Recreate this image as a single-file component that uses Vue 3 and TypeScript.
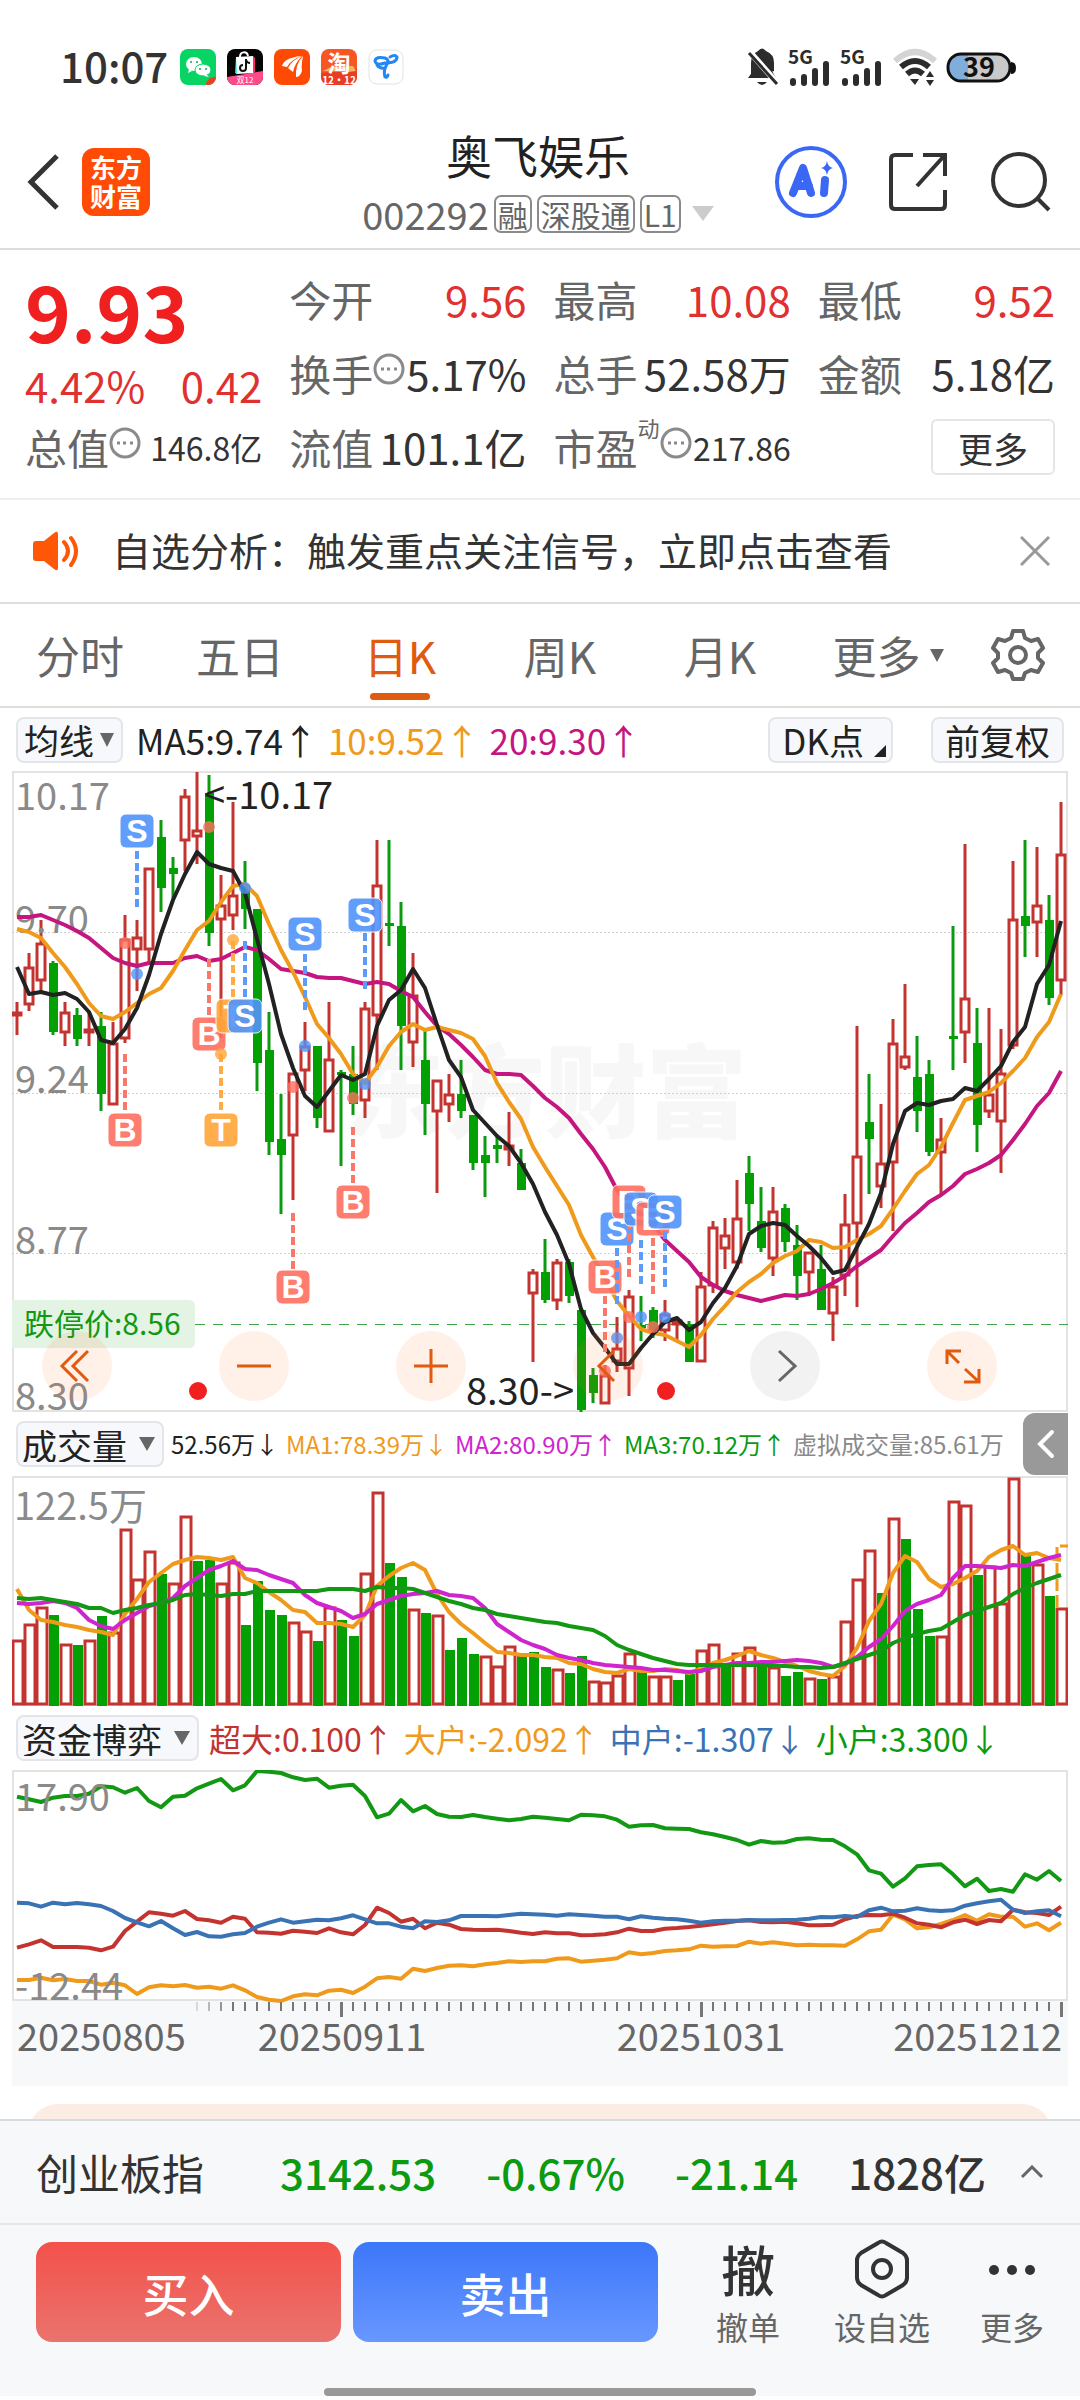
<script setup lang="ts">
import { ref } from 'vue'

type Tone = 'up' | 'down'

interface Marker {
  day: number
  box: number
  dash: [number, number]
  dot: number
  kind: 'S' | 'B' | 'T'
}

const DAYS = 88
const STEP = 12
const dayX = (i: number): number => 5 + i * STEP

// Plot units of the three panels, converted to panel pixels
const priceY = (v: number): number => Math.round((v - 27) * 0.4208 + 1)
const volumeY = (v: number): number => Math.round((v - 198) / 3 + 1)
const fundY = (v: number): number => (v - 210) / 3 + 1

const line = (values: number[], y: (v: number) => number): string =>
  values.map((v, i) => `${dayX(i)},${y(v).toFixed(1)}`).join(' ')

// tone, high, body top, body bottom, low
const rawCandles = `r573,597,606,652 r458,491,581,596 r378,433,523,555 g475,482,645,653 r573,597,648,678 g589,605,661,678
r597,637,646,678 g597,630,793,833 r622,670,818,818 r368,425,662,670 r378,418,451,548 r254,254,451,480 g140,181,303,360
g230,254,270,328 r67,83,190,262 r27,164,181,246 g34,76,409,441 r271,344,378,660 r99,319,369,402 g238,295,352,401
g352,352,719,784 g597,687,907,938 g793,899,938,1078 r743,743,891,1045 r622,678,737,784 g678,678,850,873 r573,710,883,883
g735,740,746,964 g678,744,816,841 r573,589,810,850 r189,295,606,735 g189,385,392,441 g336,393,630,735 r458,556,670,727
g641,711,817,890 r760,760,834,1028 r744,792,818,858 g711,793,833,850 g841,841,955,972 g891,938,955,1037 g891,914,922,955
r834,913,925,964 g923,955,1021,1021 r1208,1216,1267,1428 g1136,1216,1282,1290 r1184,1192,1283,1306 g1184,1192,1273,1290
g1306,1306,1542,1550 g1444,1461,1502,1526 r1436,1461,1528,1528 r1322,1397,1430,1453 r1258,1273,1445,1510 g1273,1340,1347,1380
g1299,1306,1354,1371 r1282,1314,1356,1380 r1330,1330,1340,1380 g1331,1339,1428,1428 r1216,1248,1430,1430 r1095,1109,1249,1265
r1086,1127,1160,1208 r996,1086,1193,1208 g939,981,1053,1118 g1013,1095,1159,1168 r1013,1070,1185,1224 g1053,1062,1143,1167
g1103,1151,1224,1282 r1167,1167,1217,1273 g1152,1209,1306,1306 r1226,1249,1315,1380 r1029,1102,1225,1273 r630,939,1102,1298
g744,858,898,1029 r817,956,1014,1062 r613,670,956,1118 r531,703,730,735 g654,752,833,882 g711,744,931,939 r850,898,932,1029
g393,655,661,735 r197,564,647,719 g589,671,866,931 r589,793,834,850 r638,743,858,980 r238,376,679,686 g189,369,392,466
r206,344,385,466 g320,378,564,580 r99,221,523,556`

const toneOf = (token: string): Tone => (token[0] === 'r' ? 'up' : 'down')

const candles = rawCandles.split(/\s+/).map((token, i) => {
  const [high, top, bottom, low] = token.slice(1).split(',').map((v) => priceY(Number(v)))
  return { x: dayX(i), tone: toneOf(token), high, top, bottom, low }
})

const ma5 = [490,554,550,558,553,566,597,665,671,637,588,510,412,332,270,216,245,254,263,315,425,530,650,730,796,822,784,746,758,744,630,568,546,494,540,628,711,752,831,860,892,916,955,1007,1072,1127,1196,1304,1361,1395,1434,1435,1396,1362,1334,1325,1352,1333,1288,1253,1200,1125,1107,1099,1103,1130,1153,1182,1217,1210,1155,1100,1028,910,833,813,818,808,805,778,784,757,725,668,634,530,485,380]
const ma10 = [400,407,422,458,490,530,577,608,615,597,577,554,540,500,450,402,380,337,298,292,322,388,450,502,562,627,658,696,745,765,728,677,646,627,640,633,640,648,662,702,765,812,852,918,966,1010,1056,1127,1180,1230,1283,1320,1350,1360,1364,1380,1393,1365,1327,1297,1262,1240,1221,1193,1177,1165,1139,1144,1158,1156,1140,1125,1105,1066,1022,983,960,918,860,806,798,788,765,737,706,657,620,554]
const ma20 = [371,371,366,378,390,404,421,446,470,482,487,482,481,481,470,465,476,471,458,444,450,471,495,500,505,514,517,516,523,530,525,531,548,562,598,630,650,675,705,735,744,745,748,773,802,822,850,888,922,966,1020,1050,1076,1104,1138,1165,1192,1226,1247,1260,1271,1278,1285,1278,1271,1272,1268,1256,1242,1225,1202,1183,1163,1130,1099,1074,1049,1032,1010,982,970,957,936,901,864,821,790,737]

const rawVolumes = `r688 r640 r587 g612 r698 g702 r686 g615 r664 r355 r504 r419 g489 r516 r314 g449 g447 r516 r454 g641 g510 g597 g612 r632
r659 g690 r587 g626 g674 r487 r244 g455 g498 r593 g606 r612 g717 g681 g729 r735 r765 r706 g733 g724 g767 r775 g787 g736 r810
r813 r793 r726 g773 r794 r794 g807 g789 r717 r698 g760 r727 r709 g757 r769 g796 g784 r801 g804 r796 r630 r503 r416 g547 r320
g384 g594 g674 r676 r270 r283 g492 r464 r576 r200 g432 r459 g556 r592`

const volumes = rawVolumes.split(/\s+/).map((token, i) => ({
  x: dayX(i),
  tone: toneOf(token),
  top: volumeY(Number(token.slice(1))),
}))

const vol1 = [535,597,626,634,643,648,656,663,672,608,565,512,487,458,448,438,442,447,437,500,515,542,566,597,602,637,637,639,647,612,525,495,472,457,478,550,603,640,667,695,723,725,732,733,738,741,757,759,773,783,787,774,780,780,775,778,787,775,757,748,735,721,731,742,752,765,779,788,794,765,710,630,578,485,435,452,503,527,518,500,480,437,418,404,431,426,441,446]
const vol2 = [577,580,576,571,576,590,628,645,653,627,606,585,575,562,525,500,478,466,449,474,476,492,504,517,551,575,588,600,622,608,579,566,556,550,546,539,551,556,562,590,638,663,686,702,715,733,740,747,756,762,765,767,770,776,778,781,784,780,769,763,757,755,753,752,750,748,750,756,768,760,738,708,684,645,600,579,566,552,500,466,466,469,472,462,464,452,442,433]
const vol3 = [562,565,561,568,573,578,590,592,607,598,592,583,575,568,553,548,551,555,550,549,539,539,540,541,540,539,534,534,534,540,529,530,531,533,547,558,570,578,590,597,610,616,622,628,632,636,645,650,658,675,703,718,730,740,751,760,762,762,761,762,761,762,763,764,766,767,768,770,768,757,745,733,720,697,680,668,660,655,633,612,600,588,576,549,530,515,503,493]

const fundSmall = [287,295,303,290,285,285,278,256,259,275,261,300,319,287,284,262,248,234,268,253,210,212,216,229,237,233,260,254,251,285,349,338,297,331,315,339,347,348,342,348,353,358,354,347,350,354,358,341,343,346,356,377,373,372,382,383,384,394,400,408,417,431,420,425,424,414,412,416,417,436,460,508,518,557,532,496,492,490,520,556,533,570,564,572,520,536,510,540]
const fundHuge = [740,730,718,738,738,738,740,748,737,690,662,634,638,644,630,654,658,665,647,653,694,695,698,689,692,696,682,694,700,672,620,636,662,653,682,665,671,684,686,687,686,690,695,699,694,697,697,703,702,700,694,683,690,690,683,681,678,674,670,665,660,658,663,664,662,667,673,673,671,655,645,642,643,638,650,667,671,679,664,656,669,657,661,626,634,636,642,617]
const fundMid = [605,607,617,605,610,606,610,615,630,651,664,676,660,682,702,693,706,707,700,696,677,665,655,665,661,656,658,652,643,655,667,667,677,682,661,663,658,645,645,645,646,642,638,640,641,644,640,642,644,647,647,655,646,650,653,655,659,665,661,659,659,657,658,658,657,656,653,648,649,645,648,628,620,631,629,622,628,630,628,614,607,601,596,626,636,631,628,646]
const fundBig = [837,837,830,838,834,840,840,851,845,853,879,859,853,856,852,860,857,863,853,868,888,896,900,886,880,883,869,866,876,857,832,828,833,803,810,801,794,793,796,790,786,781,783,781,781,773,772,782,779,776,772,754,760,756,750,748,745,734,737,736,735,722,728,724,728,733,731,733,733,734,715,691,686,641,655,682,679,669,657,642,659,640,647,647,677,667,688,665]

const markers: Marker[] = [
  { day: 10, box: 168, dash: [214, 350], dot: 507, kind: 'S' },
  { day: 9, box: 877, dash: [698, 836], dot: 434, kind: 'B' },
  { day: 16, box: 649, dash: [472, 606], dot: 157, kind: 'B' },
  { day: 17, box: 877, dash: [698, 836], dot: 698, kind: 'T' },
  { day: 18, box: 606, dash: [428, 564], dot: 427, kind: 'T' },
  { day: 19, box: 606, dash: [428, 564], dot: 303, kind: 'S' },
  { day: 24, box: 413, dash: [459, 595], dot: 678, kind: 'S' },
  { day: 23, box: 1252, dash: [1074, 1212], dot: 776, kind: 'B' },
  { day: 28, box: 1048, dash: [870, 1006], dot: 801, kind: 'B' },
  { day: 29, box: 366, dash: [410, 545], dot: 768, kind: 'S' },
  { day: 49, box: 1228, dash: [1273, 1408], dot: 1450, kind: 'B' },
  { day: 50, box: 1114, dash: [1158, 1294], dot: 1371, kind: 'S' },
  { day: 51, box: 1050, dash: [1095, 1232], dot: 1322, kind: 'B' },
  { day: 52, box: 1066, dash: [1138, 1245], dot: 1322, kind: 'S' },
  { day: 53, box: 1090, dash: [1135, 1270], dot: 1347, kind: 'B' },
  { day: 54, box: 1073, dash: [1118, 1252], dot: 1322, kind: 'S' },
]

const priceLabels = [
  { text: '10.17', y: 39 },
  { text: '9.70', y: 162 },
  { text: '9.24', y: 322 },
  { text: '8.77', y: 483 },
  { text: '8.30', y: 639 },
]

const ticks = Array.from({ length: DAYS - 15 }, (_, k) => {
  const day = k + 15
  return { x: dayX(day), major: [27, 57, 87].includes(day), opacity: Math.min(1, 0.25 + k * 0.25) }
})

const tabs = ['分时', '五日', '日K', '周K', '月K']
const activeTab = ref('日K')
</script>

<template>
  <div class="screen">
    <div class="status">
      <span class="clock">10:07</span>
      <svg class="app" viewBox="0 0 36 36"><rect width="36" height="36" rx="8" fill="#07d463" /><ellipse cx="14" cy="15" rx="8" ry="7" fill="#fff" /><path d="M9 20l-1 4 4-2z" fill="#fff" /><ellipse cx="23" cy="21" rx="8" ry="6" fill="#fff" stroke="#07d463" /><path d="M26 25l3 3-5-1z" fill="#fff" /><g fill="#07a84e"><circle cx="11" cy="13" r="1" /><circle cx="17" cy="13" r="1" /><circle cx="20" cy="20" r="1" /><circle cx="26" cy="20" r="1" /></g><path d="M26 36a9 8 0 0 1 10-8a8 8 0 0 1-8 8z" fill="#e5421f" /></svg>
      <svg class="app" viewBox="0 0 36 36"><rect width="36" height="36" rx="8" fill="#050505" /><path d="M0 28L36 22v6a8 8 0 0 1-8 8H8a8 8 0 0 1-8-8z" fill="#ff4b8b" /><path d="M9 8l17-1 1 17-18 1z" fill="#fff" /><path d="M26 7l2 2v14l-2 1z" fill="#ff2d63" /><path d="M9 8l-1 16 2 1z" fill="#25e6ec" /><path d="M13 8c0-6 7-6 8-1" stroke="#fff" stroke-width="2" fill="none" /><path d="M19 10v9a3 3 0 1 1-3-3M19 11q1 3 4 3" stroke="#111" stroke-width="2" fill="none" /><text x="18" y="34" font-size="8" text-anchor="middle" fill="#fff">双12</text></svg>
      <svg class="app" viewBox="0 0 36 36"><rect width="36" height="36" rx="8" fill="#ff4a05" /><path d="M8 17Q10 9 27 7Q17 11 13 18zM14 19Q18 11 28 7Q21 14 19 23zM22 28Q21 15 29 7Q27 17 28 22Q26 28 22 28z" fill="#fff" /></svg>
      <svg class="app" viewBox="0 0 36 36"><rect width="36" height="36" rx="8" fill="#f75722" /><path d="M0 24L36 20v8a8 8 0 0 1-8 8H8a8 8 0 0 1-8-8z" fill="#e83d25" /><path d="M2 22l8-4 22-1 3 5-8 1z" fill="#f6b45f" /><text x="18" y="23" font-size="23" font-weight="700" text-anchor="middle" fill="#fff">淘</text><text x="18" y="35" font-size="10" font-weight="700" text-anchor="middle" fill="#fff">12·12</text></svg>
      <svg class="app" viewBox="0 0 36 36"><rect x="1" y="1" width="34" height="34" rx="8" fill="#fff" stroke="#e2e2e2" /><path d="M17 14Q8 17 7 12Q8 7 17 9Q22 11 19 15Q15 22 17 28Q19 29 20 26M17 14Q29 14 29 8Q27 5 22 8M9 16Q12 20 17 19" stroke="#2386f5" stroke-width="3" fill="none" stroke-linecap="round" /></svg>
      <svg class="system" width="272" height="42" viewBox="0 0 272 42" fill="none">
        <path d="M5 32V17Q5 8 12 5q4-5 8 0q8 3 8 12v8z" fill="#2c2c2c" /><path d="M2 32h28l-4-7V17H7v8z" fill="#2c2c2c" /><path d="M3 5L32 38" stroke="#fff" stroke-width="6" /><path d="M3 7L31 38" stroke="#2c2c2c" stroke-width="3" /><path d="M11 36h10q-5 6-10 0" fill="#2c2c2c" />
        <g fill="#2c2c2c" font-size="19" font-weight="700"><text x="42" y="18">5G</text><text x="94" y="18">5G</text></g>
        <g stroke="#2c2c2c" stroke-width="6" stroke-linecap="round"><path d="M47 35v2M58 31v6M69 25v12M80 18v19" /><path d="M99 35v2M110 31v6M121 25v12M132 18v19" /></g>
        <g stroke-width="6"><path d="M149 15Q169-3 189 15" stroke="#d4d4d4" /><path d="M155 21Q169 9 183 21" stroke="#2c2c2c" /><path d="M161 28Q169 21 177 28" stroke="#2c2c2c" /></g><path d="M164 33h9l-4 6zM180 31l4-6 4 6zM180 34h8l-4 6z" fill="#2c2c2c" />
        <rect x="202" y="8" width="62" height="27" rx="13" fill="#c9c9c9" /><path d="M216 8h6v27h-6a13 13 0 0 1 0-27z" fill="#81addb" /><rect x="202" y="8" width="62" height="27" rx="13" stroke="#111" stroke-width="3" /><path d="M265 16q5 0 5 6t-5 6z" fill="#111" /><text x="233" y="31" font-size="27" font-weight="700" text-anchor="middle" fill="#111">39</text>
      </svg>
    </div>

    <header class="header">
      <div class="left">
        <button class="plain" aria-label="返回"><svg width="34" height="60" viewBox="0 0 34 60" fill="none" stroke="#333" stroke-width="5"><path d="M31 4L5 30l26 26" /></svg></button>
        <div class="brand"><span>东方</span><span>财富</span></div>
      </div>
      <div class="title">
        <h1>奥飞娱乐</h1>
        <div class="code"><span>002292</span><i>融</i><i>深股通</i><i>L1</i><svg width="22" height="15" viewBox="0 0 22 15"><path d="M0 0h22L11 15z" fill="#ccc" /></svg></div>
      </div>
      <div class="tools">
        <button class="plain" aria-label="AI"><svg width="74" height="74" viewBox="0 0 74 74" fill="none"><circle cx="37" cy="37" r="34" stroke="#3a68f5" stroke-width="4" /><path d="M19 48L29 23L37 48M23 41h12" stroke="#3a68f5" stroke-width="8" stroke-linecap="round" stroke-linejoin="round" /><path d="M51 35L50 48" stroke="#3a68f5" stroke-width="8" stroke-linecap="round" /><path d="M53 16q1 6 6 7q-5 1-6 7q-1-6-6-7q5-1 6-7z" fill="#3a68f5" /></svg></button>
        <button class="plain" aria-label="分享"><svg width="60" height="60" viewBox="0 0 60 60" fill="none" stroke="#333" stroke-width="4"><path d="M24 3H6Q2 3 2 7v46q0 4 4 4h46q4 0 4-4V38" /><path d="M34 3h22v21M55 4L28 34" /></svg></button>
        <button class="plain" aria-label="搜索"><svg width="62" height="62" viewBox="0 0 62 62" fill="none" stroke="#333" stroke-width="4"><circle cx="29" cy="29" r="26" /><path d="M47 47l12 12" /></svg></button>
      </div>
    </header>

    <section class="quote">
      <div class="lead">
        <strong>9.93</strong>
        <div class="pair red"><span>4.42%</span><span>0.42</span></div>
      </div>
      <div class="cell"><span>今开</span><b class="red">9.56</b></div>
      <div class="cell"><span>最高</span><b class="red">10.08</b></div>
      <div class="cell"><span>最低</span><b class="red">9.52</b></div>
      <div class="cell"><span>换手<svg class="info" viewBox="0 0 32 32"><circle cx="16" cy="16" r="14" /><path d="M8 16h3M14 16h3M21 16h3" /></svg></span><b>5.17%</b></div>
      <div class="cell"><span>总手</span><b>52.58万</b></div>
      <div class="cell"><span>金额</span><b>5.18亿</b></div>
      <div class="cell"><span>总值<svg class="info" viewBox="0 0 32 32"><circle cx="16" cy="16" r="14" /><path d="M8 16h3M14 16h3M21 16h3" /></svg></span><b class="small">146.8亿</b></div>
      <div class="cell"><span>流值</span><b>101.1亿</b></div>
      <div class="cell"><span>市盈<sup>动</sup><svg class="info" viewBox="0 0 32 32"><circle cx="16" cy="16" r="14" /><path d="M8 16h3M14 16h3M21 16h3" /></svg></span><b class="small">217.86</b></div>
      <div class="cell end"><button class="more">更多</button></div>
    </section>

    <section class="notice">
      <svg width="48" height="40" viewBox="0 0 48 40"><path d="M0 13q0-3 3-3h8L21 2q4-3 4 1v34q0 4-4 1L11 30H3q-3 0-3-3z" fill="#ff5708" /><path d="M31 11q8 9 0 18M38 7q10 13 0 27" fill="none" stroke="#ff5708" stroke-width="4" stroke-linecap="round" /></svg>
      <p>自选分析：触发重点关注信号，立即点击查看</p>
      <button class="plain" aria-label="关闭"><svg width="30" height="30" viewBox="0 0 30 30" stroke="#999" stroke-width="3"><path d="M1 1l28 28M29 1L1 29" /></svg></button>
    </section>

    <nav class="tabs">
      <button v-for="tab in tabs" :key="tab" class="plain" :class="{ active: tab === activeTab }" @click="activeTab = tab">{{ tab }}</button>
      <button class="plain">更多<svg width="14" height="13" viewBox="0 0 14 13"><path d="M0 0h14L7 13z" fill="#666" /></svg></button>
      <button class="plain" aria-label="设置"><svg width="54" height="54" viewBox="0 0 54 54" fill="none" stroke="#666" stroke-width="4"><path d="M22 3h10l2 7l6 3l7-2l5 9l-5 5v5l5 5l-5 9l-7-2l-6 3l-2 6H22l-2-6l-6-3l-7 2l-5-9l5-5v-5l-5-5l5-9l7 2l6-3z" stroke-linejoin="round" /><circle cx="27" cy="27" r="8" /></svg></button>
    </nav>

    <div class="legend average">
      <label class="picker tight"><select aria-label="均线"><option>均线</option></select><svg width="14" height="14" viewBox="0 0 14 14"><path d="M0 0h14L7 14z" fill="#666" /></svg></label>
      <span class="ink">MA5:9.74↑</span><span class="orange">10:9.52↑</span><span class="pink">20:9.30↑</span>
      <span class="spacer"></span>
      <button class="chip dk">DK点<svg width="12" height="12" viewBox="0 0 12 12"><path d="M12 0v12H0z" fill="#222" /></svg></button>
      <button class="chip">前复权</button>
    </div>

    <div class="kline">
      <svg class="plot" viewBox="0 0 1056 641">
        <text class="watermark" x="533" y="359" text-anchor="middle">东方财富</text>
        <g class="frame"><rect x="1" y="1" width="1054" height="639" /></g>
        <g class="grid"><path d="M0 161H1056M0 322H1056M0 482H1056" /></g>
        <path class="limit" d="M183 553H1056" />
        <g v-for="c in candles" :key="c.x" :class="c.tone">
          <path :d="`M${c.x} ${c.high}V${c.top}M${c.x} ${c.bottom}V${c.low}`" />
          <rect v-if="c.tone === 'up'" :x="c.x - 4" :y="c.top + 1" width="8" :height="Math.max(2, c.bottom - c.top - 2)" />
          <rect v-else :x="c.x - 4" :y="c.top" width="9" :height="Math.max(3, c.bottom - c.top)" />
        </g>
        <g class="axis"><text v-for="l in priceLabels" :key="l.text" x="3" :y="l.y">{{ l.text }}</text></g>
        <g class="curve">
          <polyline :points="line(ma20, priceY)" stroke="#c5157f" />
          <polyline :points="line(ma10, priceY)" stroke="#f09a1c" />
          <polyline :points="line(ma5, priceY)" stroke="#222" />
        </g>
        <g v-for="m in markers" :key="m.day" class="marker" :class="m.kind">
          <path :d="`M${dayX(m.day)} ${priceY(m.dash[0])}V${priceY(m.dash[1])}`" />
          <circle :cx="dayX(m.day)" :cy="priceY(m.dot)" r="6" />
          <rect :x="dayX(m.day) - 17" :y="priceY(m.box) - 17" width="34" height="34" rx="6" />
          <text :x="dayX(m.day)" :y="priceY(m.box) + 11">{{ m.kind }}</text>
        </g>
        <g class="extreme"><text x="192" y="38">&lt;-10.17</text><text x="562" y="634" text-anchor="end">8.30-&gt;</text></g>
        <path d="M0 529H177q6 0 6 6v36q0 6-6 6H0z" fill="#e3f4e4" />
        <text class="limit-text" x="12" y="564">跌停价:8.56</text>
        <g fill="#f12020"><circle cx="186" cy="620" r="9" /><circle cx="654" cy="620" r="9" /></g>
      </svg>
      <div class="controls">
        <button aria-label="快退"><svg viewBox="0 0 70 70"><path d="M35 20L20 35l15 15M46 20L31 35l15 15" /></svg></button>
        <button aria-label="缩小"><svg viewBox="0 0 70 70"><path d="M18 35h34" /></svg></button>
        <button aria-label="放大"><svg viewBox="0 0 70 70"><path d="M18 35h34M35 18v34" /></svg></button>
        <button aria-label="后退"><svg viewBox="0 0 70 70"><path d="M41 20L26 35l15 15" /></svg></button>
        <button class="off" aria-label="前进"><svg viewBox="0 0 70 70"><path d="M29 20l16 15-16 15" /></svg></button>
        <button aria-label="全屏"><svg viewBox="0 0 70 70"><path d="M20 33V20h14M21 21l11 11M52 38v13H37M51 50L38 38" stroke-width="4" /></svg></button>
      </div>
    </div>

    <div class="legend volume">
      <label class="picker"><select aria-label="成交量"><option>成交量</option></select><svg width="16" height="14" viewBox="0 0 16 14"><path d="M0 0h16L8 14z" fill="#666" /></svg></label>
      <span class="ink">52.56万↓</span><span class="orange">MA1:78.39万↓</span><span class="violet">MA2:80.90万↑</span><span class="green">MA3:70.12万↑</span><span class="grey">虚拟成交量:85.61万</span>
      <span class="spacer"></span>
      <button class="fold" aria-label="展开"><svg width="20" height="34" viewBox="0 0 20 34" fill="none" stroke="#fff" stroke-width="4" stroke-linecap="round"><path d="M16 5L4 17l12 12" /></svg></button>
    </div>

    <svg class="plot" viewBox="0 0 1056 230">
      <g class="frame"><rect x="1" y="1" width="1054" height="228" /></g>
      <text class="axis" x="2" y="44">122.5万</text>
      <g v-for="v in volumes" :key="v.x" class="bar" :class="v.tone">
        <rect v-if="v.tone === 'up'" :x="v.x - 4" :y="v.top + 1" width="10" :height="227 - v.top" />
        <rect v-else :x="v.x - 4" :y="v.top" width="10" :height="230 - v.top" />
      </g>
      <path d="M1045 131V70h11" fill="none" stroke="#f09a1c" stroke-width="3" stroke-dasharray="12 4" />
      <g class="curve">
        <polyline :points="line(vol1, volumeY)" stroke="#f09a1c" />
        <polyline :points="line(vol2, volumeY)" stroke="#cf25cf" />
        <polyline :points="line(vol3, volumeY)" stroke="#129812" />
      </g>
    </svg>

    <div class="legend fund">
      <label class="picker"><select aria-label="资金博弈"><option>资金博弈</option></select><svg width="16" height="14" viewBox="0 0 16 14"><path d="M0 0h16L8 14z" fill="#666" /></svg></label>
      <span class="crimson">超大:0.100↑</span><span class="orange">大户:-2.092↑</span><span class="blue">中户:-1.307↓</span><span class="green">小户:3.300↓</span>
    </div>

    <svg class="plot" viewBox="0 0 1056 316">
      <rect y="231" width="1056" height="85" fill="#f7f8fa" />
      <g class="frame"><rect x="1" y="1" width="1054" height="229" /></g>
      <g class="curve">
        <polyline :points="line(fundBig, fundY)" stroke="#f09a1c" />
        <polyline :points="line(fundHuge, fundY)" stroke="#c33431" />
        <polyline :points="line(fundMid, fundY)" stroke="#3a73b4" />
        <polyline :points="line(fundSmall, fundY)" stroke="#129812" />
      </g>
      <g class="axis"><text x="3" y="41">17.90</text><text x="3" y="230">-12.44</text></g>
      <g fill="#777"><rect v-for="t in ticks" :key="t.x" :x="t.x - 1" y="232" :width="t.major ? 3 : 2" :height="t.major ? 15 : 9" :opacity="t.opacity" /></g>
      <g class="date"><text x="5" y="281">20250805</text><text x="330" y="281" text-anchor="middle">20250911</text><text x="689" y="281" text-anchor="middle">20251031</text><text x="1050" y="281" text-anchor="end">20251212</text></g>
    </svg>

    <div class="peek"><div></div></div>

    <footer class="footer">
      <div class="index"><span>创业板指</span><b class="green">3142.53</b><b class="green">-0.67%</b><b class="green">-21.14</b><b>1828亿</b><svg width="24" height="14" viewBox="0 0 24 14" fill="none" stroke="#666" stroke-width="3"><path d="M2 12L12 2l10 10" /></svg></div>
      <div class="actions">
        <button class="trade buy">买入</button>
        <button class="trade sell">卖出</button>
        <button class="plain act"><span class="glyph">撤</span>撤单</button>
        <button class="plain act wide"><span class="glyph"><svg width="56" height="60" viewBox="0 0 56 60" fill="none" stroke="#333" stroke-width="4"><path d="M24 4q4-3 8 0l17 10q4 3 4 7v18q0 4-4 7L32 56q-4 3-8 0L7 46q-4-3-4-7V21q0-4 4-7z" /><circle cx="28" cy="30" r="9" /></svg></span>设自选</button>
        <button class="plain act"><span class="glyph"><svg width="48" height="60" viewBox="0 0 48 60" fill="#333"><circle cx="6" cy="31" r="5" /><circle cx="24" cy="31" r="5" /><circle cx="42" cy="31" r="5" /></svg></span>更多</button>
      </div>
      <div class="home"></div>
    </footer>
  </div>
</template>

<style>
body { background: #fff; }
</style>

<style scoped>
.screen { font-family: "Noto Sans CJK SC", sans-serif; color: #333; background: #fff; line-height: 1; overflow: hidden; }
svg { display: block; flex: none; }
h1, p { margin: 0; font-weight: 400; }
button { font-family: inherit; color: inherit; line-height: 1; }
.plain { border: 0; background: none; padding: 0; }
.spacer { flex: 1; }
.red { color: #e03030; }
.green { color: #0b9a10; }
.ink { color: #222; }
.orange { color: #f09a1c; }
.pink { color: #c5157f; }
.violet { color: #cf25cf; }
.grey { color: #8a8a8a; }
.crimson { color: #c33431; }
.blue { color: #3a73b4; }

.status { display: flex; align-items: center; gap: 11px; height: 36px; padding: 49px 62px 0 60px; }
.clock { font-size: 42px; line-height: 32px; padding-bottom: 4px; font-weight: 500; margin-right: 1px; }
.app { width: 36px; height: 36px; overflow: visible; }
.system { margin: 0 0 0 auto; overflow: visible; }

.header { display: grid; grid-template-columns: 1fr auto 1fr; align-items: center; height: 163px; border-bottom: 2px solid #ddd; }
.left { display: flex; align-items: center; gap: 22px; padding: 30px 0 0 26px; }
.brand { display: grid; place-content: center; gap: 3px; width: 68px; height: 68px; border-radius: 12px; background: #ff4b05; color: #fff; font-size: 26px; font-weight: 700; }
.title { display: grid; justify-items: center; gap: 18px; padding: 30px 4px 0 0; }
.title h1 { font-size: 46px; color: #222; }
.code { display: flex; align-items: center; gap: 5px; font-size: 38px; color: #666; }
.code i { display: grid; place-items: center; height: 34px; padding: 0 2px; border: 2px solid #8a8a8a; border-radius: 7px; font-size: 30px; font-style: normal; }
.code svg { margin-left: 6px; }
.tools { display: flex; align-items: center; justify-content: flex-end; gap: 41px; padding: 30px 28px 0 0; }

.quote { display: grid; grid-template-columns: repeat(4, 1fr); grid-auto-rows: 74px; column-gap: 27px; padding: 12px 25px 14px; border-bottom: 2px solid #eee; }
.lead { grid-row: span 2; padding-top: 4px; }
.lead strong { display: block; color: #f12020; font-size: 78px; line-height: 86px; font-weight: 700; }
.pair { display: flex; justify-content: space-between; font-size: 42px; padding-top: 12px; }
.cell { display: flex; align-items: center; justify-content: space-between; white-space: nowrap; font-size: 42px; color: #666; }
.cell > span { display: flex; align-items: center; }
.cell b { color: #333; font-weight: 400; }
.cell b.red { color: #e03030; }
.cell b.small { font-size: 32px; }
.cell sup { font-size: 22px; margin: -40px 0 0; }
.info { width: 32px; height: 32px; fill: none; stroke: #8a8a8a; stroke-width: 3; margin-top: -8px; }
.end { justify-content: flex-end; }
.more { width: 124px; height: 56px; border: 2px solid #e5e5e5; border-radius: 6px; background: #fff; color: #333; font-size: 35px; padding: 0; }

.notice { display: flex; align-items: center; height: 102px; padding: 0 30px 0 33px; border-bottom: 2px solid #ddd; }
.notice p { flex: 1; padding: 0 0 4px 31px; font-size: 39px; }

.tabs { display: grid; grid-template-columns: repeat(5, 160fr) 176fr 84fr; height: 102px; padding-right: 20px; border-bottom: 2px solid #ddd; color: #666; }
.tabs button { display: flex; position: relative; align-items: center; justify-content: center; gap: 9px; font-size: 44px; }
.tabs .active { color: #e05a10; }
.tabs .active::after { content: ""; position: absolute; bottom: 6px; width: 60px; height: 7px; border-radius: 4px; background: #e05a10; }

.legend { display: flex; align-items: center; white-space: nowrap; padding-left: 16px; }
.average { height: 63px; gap: 10px; padding-right: 16px; font-size: 35px; }
.volume { height: 64px; gap: 7px; padding-right: 12px; font-size: 24px; }
.fund { height: 64px; gap: 10px; font-size: 32px; }
.picker { display: flex; position: relative; align-items: center; }
.picker select { appearance: none; height: 46px; padding: 0 34px 0 4px; border: 2px solid #e3e5ea; border-radius: 8px; background: #f7f8fb; color: #222; font-family: inherit; font-size: 35px; line-height: 1; }
.tight select { padding: 0 26px 0 6px; }
.picker svg { position: absolute; right: 9px; }
.picker.tight { margin-right: 3px; }
.chip { display: flex; align-items: center; height: 46px; padding: 0 12px; border: 2px solid #e3e5ea; border-radius: 8px; background: #f7f8fb; color: #222; font-size: 35px; }
.dk { gap: 10px; margin-right: 28px; padding: 0 5px 0 12px; }
.dk svg { align-self: flex-end; margin-bottom: 4px; }
.fold { display: grid; flex: none; place-items: center; width: 45px; height: 62px; border: 0; border-radius: 12px 0 0 12px; background: #999; padding: 0; }

.plot { width: calc(100% - 24px); margin: 0 12px; height: auto; }
.frame rect { fill: none; stroke: #e3e3e3; stroke-width: 2; }
.grid path { stroke: #d0d0d0; stroke-width: 1; stroke-dasharray: 2 2; shape-rendering: crispEdges; }
.limit { stroke: #3da545; stroke-width: 1; stroke-dasharray: 10 8; shape-rendering: crispEdges; }
.up path { stroke: #c33431; stroke-width: 3; }
.up rect { fill: #fff; stroke: #c33431; stroke-width: 3; }
.down path { stroke: #0b9a10; stroke-width: 3; }
.down rect { fill: #02a002; }
.axis { font-size: 38px; fill: #8a8a8a; }
.date { font-size: 38px; fill: #666; }
.curve polyline { fill: none; stroke-width: 4; stroke-linejoin: round; }
.extreme { font-size: 38px; fill: #222; }
.watermark { font-size: 101px; font-weight: 900; fill: #f7f7f7; }
.limit-text { font-size: 30px; fill: #129812; }
.marker path { stroke-width: 4; stroke-dasharray: 8 4; }
.marker rect { stroke: #fff; stroke-width: 1; opacity: 0.9; }
.marker circle { opacity: 0.8; }
.marker text { fill: #fff; font-family: "Liberation Sans", sans-serif; font-size: 32px; font-weight: 700; text-anchor: middle; }
.S rect, .S circle { fill: #5094fb; }
.S path { stroke: #5c9cf8; }
.B rect, .B circle { fill: #ff6f60; }
.B path { stroke: #f8796a; }
.T rect, .T circle { fill: #ffa638; }
.T path { stroke: #ffac45; }

.kline { position: relative; }
.controls { position: absolute; left: 42px; right: 83px; bottom: 11px; display: flex; justify-content: space-between; }
.controls button { width: 70px; height: 70px; border: 0; border-radius: 50%; padding: 0; background: rgba(255, 120, 50, 0.11); }
.controls path { fill: none; stroke: #e05a10; stroke-width: 3; }
.controls .off { background: #f2f2f2; }
.controls .off path { stroke: #666; }

.peek { height: 15px; padding: 18px 28px 0; overflow: hidden; }
.peek div { height: 60px; border-radius: 36px; background: #fcede4; }

.footer { background: #f7f8fa; border-top: 2px solid #d8dcdc; }
.index { display: flex; align-items: center; justify-content: space-between; height: 102px; padding: 0 36px; border-bottom: 2px solid #e3e5e7; font-size: 42px; }
.index b { font-weight: 500; }
.index span { margin-right: 26px; }
.index svg { margin-left: -16px; }
.actions { display: flex; padding: 17px 26px 0 36px; }
.trade { flex: 1; height: 100px; border: 0; border-radius: 16px; margin-right: 12px; color: #fff; font-size: 46px; font-weight: 500; }
.buy { background: linear-gradient(#f4514b, #ea736d); }
.sell { background: linear-gradient(#3c77fa, #6897ff); margin-right: 48px; }
.act { display: grid; justify-items: center; align-content: start; gap: 14px; width: 84px; font-size: 32px; color: #666; }
.wide { width: 96px; margin: 0 40px 0 44px; }
.glyph { display: grid; place-content: center; height: 54px; font-size: 54px; font-weight: 500; color: #333; }
.home { width: 40%; height: 8px; margin: 46px auto 0; border-radius: 4px; background: #999; }
</style>
